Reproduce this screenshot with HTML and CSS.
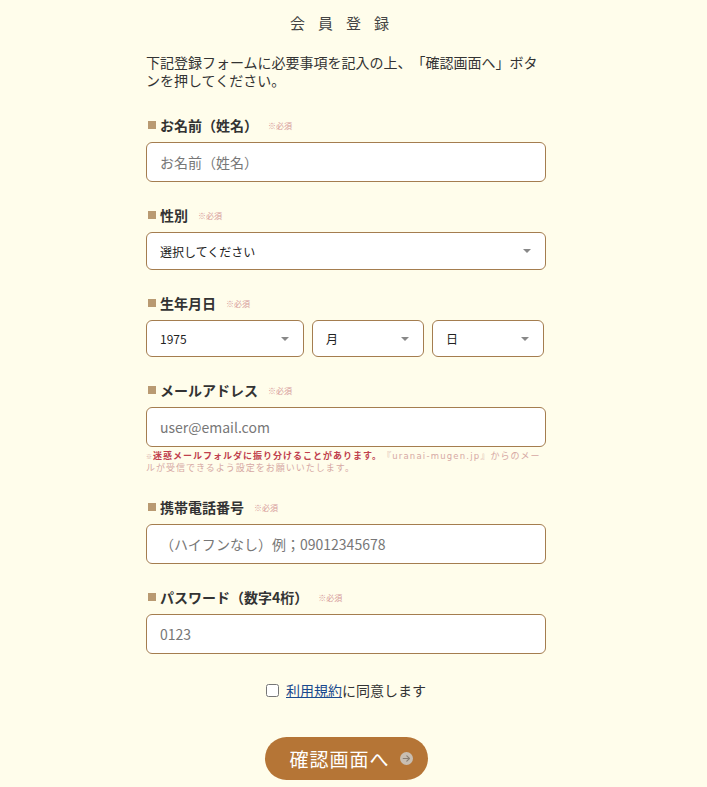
FILE: index.html
```html
<!DOCTYPE html>
<html lang="ja">
<head>
<meta charset="utf-8">
<title>会員登録</title>
<link rel="stylesheet" href="styles.css">
</head>
<body>
<main class="page">
  <h1 class="title">会員登録</h1>
  <p class="intro">下記登録フォームに必要事項を記入の上、「確認画面へ」ボタンを押してください。</p>

  <form class="form">
    <div class="field">
      <div class="label"><span class="sq"></span>お名前（姓名）<span class="req">※必須</span></div>
      <input class="input" type="text" placeholder="お名前（姓名）">
    </div>

    <div class="field">
      <div class="label"><span class="sq"></span>性別<span class="req">※必須</span></div>
      <div class="select-wrap">
        <select class="select"><option>選択してください</option></select>
      </div>
    </div>

    <div class="field">
      <div class="label"><span class="sq"></span>生年月日<span class="req">※必須</span></div>
      <div class="birth">
        <div class="select-wrap"><select class="select"><option>1975</option></select></div>
        <div class="select-wrap"><select class="select"><option>月</option></select></div>
        <div class="select-wrap"><select class="select"><option>日</option></select></div>
      </div>
    </div>

    <div class="field field-note">
      <div class="label"><span class="sq"></span>メールアドレス<span class="req">※必須</span></div>
      <input class="input" type="text" placeholder="user@email.com">
      <p class="note"><span class="mark">※</span><strong>迷惑メールフォルダに振り分けることがあります。</strong>『<span class="domain">uranai-mugen.jp</span>』からのメールが受信できるよう設定をお願いいたします。</p>
    </div>

    <div class="field">
      <div class="label"><span class="sq"></span>携帯電話番号<span class="req">※必須</span></div>
      <input class="input" type="text" placeholder="（ハイフンなし）例；09012345678">
    </div>

    <div class="field">
      <div class="label"><span class="sq"></span>パスワード（数字4桁）<span class="req">※必須</span></div>
      <input class="input" type="text" placeholder="0123">
    </div>

    <label class="agree"><input class="check" type="checkbox"><a class="terms" href="#">利用規約</a>に同意します</label>

    <div class="actions">
      <button class="submit" type="button">確認画面へ<svg class="arrow" width="13" height="13" viewBox="0 0 13 13"><circle cx="6.5" cy="6.5" r="6.5" fill="#c8beb2"/><path d="M3.2 6.5h6.2M6.8 3.8l2.7 2.7-2.7 2.7" fill="none" stroke="#8a7f74" stroke-width="1.1" stroke-linecap="round" stroke-linejoin="round"/></svg></button>
    </div>
  </form>
</main>
</body>
</html>
```
FILE: styles.css
```css
* { box-sizing: border-box; }
html, body { margin: 0; padding: 0; }
body {
  background: #fffdeb;
  color: #333;
  font-family: "Noto Sans CJK JP", "Noto Sans", sans-serif;
  padding-right: 15px;
  text-spacing-trim: space-all;
}
.page {
  width: 400px;
  margin: 0 auto;
  padding-top: 13px;
}
.title {
  margin: 0;
  text-align: center;
  font-family: "Liberation Serif", "Noto Sans CJK JP", serif;
  font-weight: 400;
  font-size: 15px;
  line-height: 22px;
  letter-spacing: 13px;
  color: #444;
}
.intro {
  margin: 18px 0 0;
  font-size: 14px;
  line-height: 18px;
  color: #333;
}
.form { margin-top: 26px; }
.field { margin-bottom: 23px; }
.label {
  display: flex;
  align-items: center;
  height: 20px;
  margin-bottom: 7px;
  font-size: 14px;
  font-weight: 700;
  color: #333;
}
.sq {
  width: 8px;
  height: 8px;
  background: #b99a72;
  margin: 0 4px 0 2px;
}
.req {
  font-size: 8px;
  font-weight: 400;
  color: #d69a9a;
  margin-left: 10px;
}
.input {
  display: block;
  width: 100%;
  height: 40px;
  border: 1px solid #a47d4f;
  border-radius: 6px;
  background: #fff;
  padding: 0 13px;
  font-family: inherit;
  font-size: 14px;
  color: #333;
  outline: none;
}
.input::placeholder { color: #777; }
.select-wrap { position: relative; }
.select-wrap::after {
  content: "";
  position: absolute;
  right: 15px;
  top: 50%;
  margin-top: -2px;
  border-left: 4px solid transparent;
  border-right: 4px solid transparent;
  border-top: 4px solid #888;
  pointer-events: none;
}
.select {
  display: block;
  width: 100%;
  height: 38px;
  -webkit-appearance: none;
  appearance: none;
  border: 1px solid #a47d4f;
  border-radius: 6px;
  background: #fff;
  padding: 0 13px;
  font-family: inherit;
  font-size: 12px;
  color: #222;
  outline: none;
}
.birth {
  display: grid;
  grid-template-columns: 158px 112px 112px;
  gap: 8px;
  height: 37px;
}
.birth .select { height: 37px; }
.note {
  margin: 3px 0 0;
  font-size: 9px;
  line-height: 11px;
  color: #d6a8a4;
  letter-spacing: 1px;
}
.note .mark { font-size: 6px; letter-spacing: 1px; }
.note strong { color: #c0404c; font-weight: 700; }
.note .domain { font-family: "DejaVu Sans", sans-serif; font-size: 8.5px; letter-spacing: 1.2px; }
.field-note { margin-bottom: 24px; }
.agree {
  display: flex;
  justify-content: center;
  align-items: center;
  margin-top: 26px;
  font-size: 14px;
  color: #333;
  line-height: 20px;
}
.check {
  width: 13px;
  height: 13px;
  margin: 0 7px 0 0;
}
.terms { color: #1a4a8e; text-decoration: underline; }
.actions {
  display: flex;
  justify-content: center;
  margin-top: 37px;
  padding-bottom: 20px;
}
.submit {
  display: flex;
  align-items: center;
  justify-content: center;
  width: 163px;
  height: 43px;
  border: none;
  border-radius: 22px;
  background: #b57536;
  color: #fff;
  font-family: "Liberation Serif", "Noto Sans CJK JP", serif;
  font-size: 19px;
  letter-spacing: 1px;
  padding: 0 0 0 10px;
  cursor: pointer;
}
.arrow { margin-left: 10px; }
```
